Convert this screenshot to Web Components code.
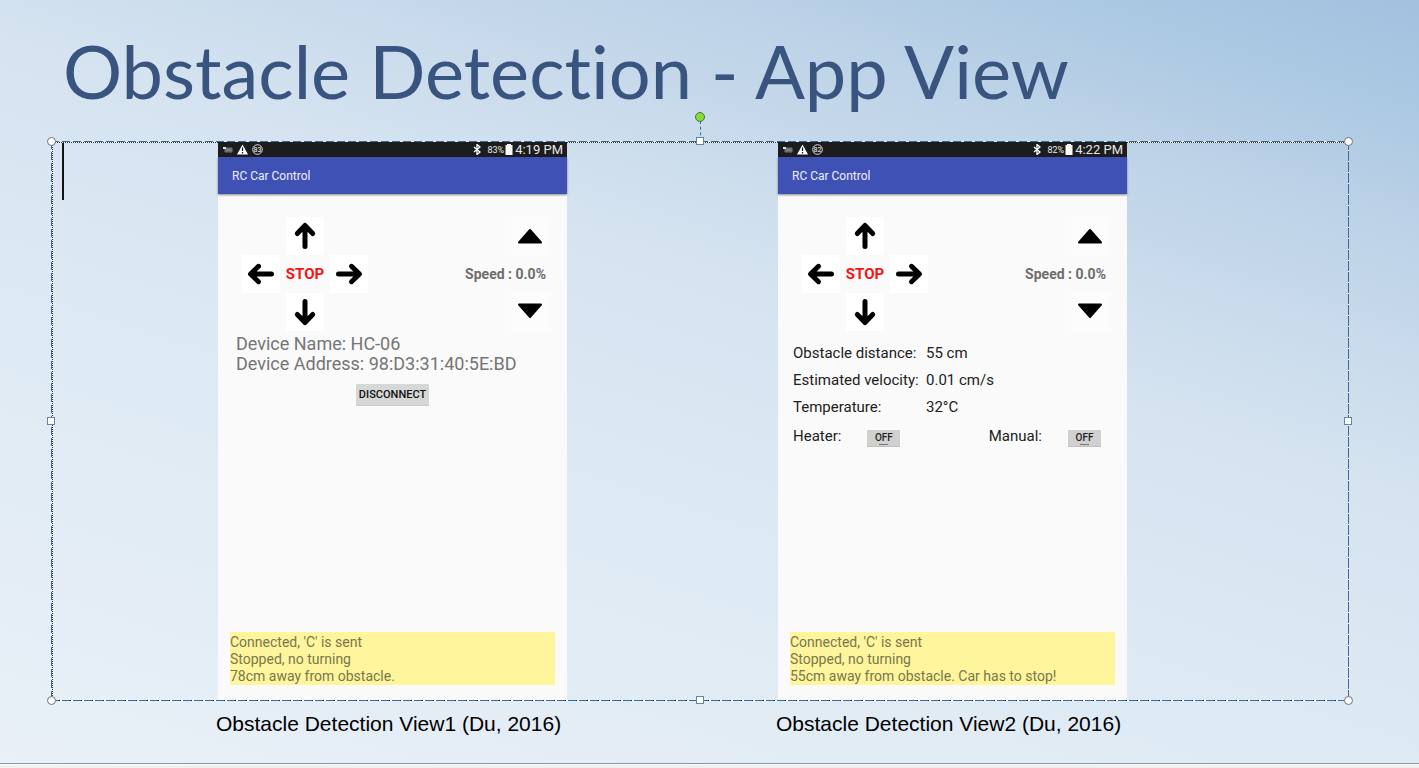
<!DOCTYPE html>
<html lang="en">
<head>
<meta charset="utf-8">
<title>Obstacle Detection - App View</title>
<style>
body { margin: 0; font-family: "Liberation Sans", Arial, sans-serif; }
</style>
</head>
<body>
<slide-page>
  <slide-title slot="title">Obstacle Detection - App View</slide-title>
  <phone-screen slot="first" battery="83" time="4:19 PM">
    <device-info name="HC-06" address="98:D3:31:40:5E:BD"></device-info>
    <span slot="log">Connected, 'C' is sent<br>Stopped, no turning<br>78cm away from obstacle.</span>
  </phone-screen>
  <phone-screen slot="second" battery="82" time="4:22 PM">
    <sensor-info distance="55 cm" velocity="0.01 cm/s" temperature="32°C"></sensor-info>
    <span slot="log">Connected, 'C' is sent<br>Stopped, no turning<br>55cm away from obstacle. Car has to stop!</span>
  </phone-screen>
  <span slot="caption1">Obstacle Detection View1 (Du, 2016)</span>
  <span slot="caption2">Obstacle Detection View2 (Du, 2016)</span>
</slide-page>

<script>
function define(tag, render) {
  customElements.define(tag, class extends HTMLElement {
    constructor() {
      super();
      this.attachShadow({ mode: 'open' });
    }
    connectedCallback() {
      this.shadowRoot.innerHTML = render(this);
    }
  });
}

define('slide-title', () => `
  <style>
    :host { display: block; }
    h1 { margin: 0; font: 400 74px/88px Lato, sans-serif; font-variant-ligatures: none; color: #38547f; white-space: nowrap; }
  </style>
  <h1><slot></slot></h1>`);

define('slide-page', () => `
  <style>
    :host { display: flex; flex-direction: column; min-height: 100vh; }
    main {
      flex: 1; padding: 0 70px 0 51px;
      background: linear-gradient(198deg, #a1c1df 0%, #aecbe3 11%, #b6cee5 15%, #bfd4e8 21%, #d5e3f0 40%, #dbe7f3 54%, #ddeaf3 61%, #e2ecf5 77%, #e9f0f8 100%);
    }
    header { height: 141px; padding: 27px 0 0 12px; box-sizing: border-box; }
    .row { display: grid; grid-template-columns: 167fr 349fr 211fr 349fr 222fr; }
    .row > :nth-child(1) { grid-column: 2; }
    .row > :nth-child(2) { grid-column: 4; }
    slot[name="first"], slot[name="second"] { display: block; }
    .captions { margin-top: 11px; font-size: 21px; line-height: 24px; color: #000; }
    .captions p { margin: 0 0 0 -2px; white-space: nowrap; }
    footer { height: 4px; background: #f0f0f0; border-top: 1px solid #8b97a4; box-shadow: inset 0 1px #fff; }
  </style>
  <main>
    <header><slot name="title"></slot></header>
    <selection-frame>
      <div class="row"><slot name="first"></slot><slot name="second"></slot></div>
    </selection-frame>
    <div class="row captions">
      <p><slot name="caption1"></slot></p>
      <p><slot name="caption2"></slot></p>
    </div>
  </main>
  <footer></footer>`);

define('selection-frame', () => `
  <style>
    :host { display: block; position: relative; padding: 1px 0; }
    .line { position: absolute; }
    .top, .bottom { left: 0; right: 0; height: 1px; }
    .top { top: 0; background: repeating-linear-gradient(90deg, #3d6a9c 0 8px, #dfe9f2 8px 11px); }
    .bottom { bottom: 0; background: repeating-linear-gradient(90deg, #3d6a9c 0 8px, #111 8px 9px, #fff 9px 11px); }
    .left, .right { top: 0; bottom: 0; width: 1px; }
    .left { left: 0; background: repeating-linear-gradient(#3d6a9c 0 8px, transparent 8px 11px); }
    .right { right: 0; background: repeating-linear-gradient(#3d6a9c 0 9px, #fff 9px 10px, #555 10px 11px); }
    .dots-top { top: 1px; left: 0; right: 0; height: 1px; background: repeating-linear-gradient(90deg, #333 0 1px, #f4f7fa 1px 2px); }
    .dots-left { left: 1px; top: 0; bottom: 0; width: 1px; background: repeating-linear-gradient(#333 0 1px, #f4f7fa 1px 2px); }
    .content { position: relative; }
    .caret { position: absolute; left: 11px; top: 2px; width: 2px; height: 57px; background: #14140f; }
    .handles { position: absolute; inset: 0 1px 1px 0; }
    .stem { position: absolute; left: 50%; top: -20px; height: 20px; border-left: 1px dashed #3d6a9c; }
    .handle { position: absolute; box-sizing: border-box; background: #fff; width: 9px; height: 9px; translate: -4px -4px; }
    .round { border: 1px solid #6c7580; border-radius: 50%; }
    .square { width: 8px; height: 8px; border: 1px solid #6285a8; }
    .rotate { width: 10px; height: 10px; border: 1px solid #4c7440; border-radius: 50%; background: #84dc34; translate: -5px -5px; }
  </style>
  <div class="line dots-top"></div><div class="line dots-left"></div>
  <div class="content"><slot></slot></div>
  <div class="line top"></div><div class="line bottom"></div>
  <div class="line left"></div><div class="line right"></div>
  <div class="caret"></div>
  <div class="handles">
    <div class="stem"></div>
    <i class="handle rotate" style="left:50%;top:-24px"></i>
    <i class="handle round" style="left:0;top:0"></i>
    <i class="handle square" style="left:50%;top:0"></i>
    <i class="handle round" style="left:100%;top:0"></i>
    <i class="handle square" style="left:0;top:50%"></i>
    <i class="handle square" style="left:100%;top:50%"></i>
    <i class="handle round" style="left:0;top:100%"></i>
    <i class="handle square" style="left:50%;top:100%"></i>
    <i class="handle round" style="left:100%;top:100%"></i>
  </div>`);

define('status-bar', el => `
  <style>
    :host { display: flex; align-items: center; height: 15px; padding: 0 4px 0 5px; background: #1c1c1c; color: #e8e8e8; font-family: Roboto, sans-serif; }
    svg { display: block; flex: none; }
    .notices { display: flex; align-items: center; gap: 4px; flex: 1; }
    .pct { font-size: 9px; margin: 0 1px 0 6px; }
    .time { font-size: 13px; line-height: 15px; margin-left: 2px; }
  </style>
  <div class="notices">
    <svg width="10" height="9" viewBox="0 0 10 9"><path d="M2 3h7v4H2z" fill="#666" stroke="#777"/><path d="M0 2h3v2H0z" fill="#ddd"/><path d="M3 5h5" stroke="#999"/></svg>
    <svg width="11" height="11" viewBox="0 0 11 11"><path d="M5.500.5 11 10.500H0z" fill="#fff"/><path d="M5.500 3.500v3.500M5.500 8v1.500" stroke="#1c1c1c" stroke-width="1.300"/></svg>
    <svg width="11" height="11" viewBox="0 0 11 11"><circle cx="5.500" cy="5.500" r="4.800" fill="none" stroke="#ddd"/><text x="5.500" y="8" text-anchor="middle" font-size="7" fill="#fff">${el.getAttribute('battery')}</text></svg>
  </div>
  <svg width="8" height="11" viewBox="0 0 8 11"><path d="M1 3l6 5-3 2.500v-10L7 3 1 8" fill="none" stroke="#fff" stroke-width="1.300"/></svg>
  <span class="pct">${el.getAttribute('battery')}%</span>
  <svg width="8" height="11" viewBox="0 0 8 11"><path d="M2 0h4v1h1.500v10H.5V1H2z" fill="#fff"/></svg>
  <span class="time">${el.getAttribute('time')}</span>`);

define('icon-button', el => {
  const shapes = {
    up: '<path d="M19 29.500V9M11.300 16.500 19 8.500l7.700 8" fill="none"/>',
    down: '<path d="M19 8.500V29M11.300 21.500 19 29.500l7.700-8" fill="none"/>',
    left: '<path d="M29.500 19H9M16.500 11.300 8.500 19l8 7.700" fill="none"/>',
    right: '<path d="M8.500 19H29M21.500 11.300 29.500 19l-8 7.700" fill="none"/>',
    faster: '<path d="M19 13 30 25.500H8z" stroke-width="2"/>',
    slower: '<path d="M19 24 30 11.500H8z" stroke-width="2"/>'
  };
  return `
  <style>
    :host { display: block; width: 38px; height: 38px; }
    button { display: block; width: 100%; height: 100%; padding: 0; border: 0; background: var(--tile, #fff); }
    svg { display: block; }
  </style>
  <button type="button" aria-label="${el.getAttribute('icon')}">
    <svg width="38" height="38" viewBox="0 0 38 38" stroke="#000" stroke-width="5" stroke-linecap="round" stroke-linejoin="round">${shapes[el.getAttribute('icon')]}</svg>
  </button>`;
});

define('car-controls', () => `
  <style>
    :host { display: flex; justify-content: space-between; padding: 0 18px 0 24px; font-family: Roboto, sans-serif; }
    .pad { display: grid; grid-template: ". up ." 38px "left stop right" 38px ". down ." 38px / 38px 50px 38px; justify-items: center; align-items: center; }
    .up { grid-area: up; }
    .left { grid-area: left; }
    .right { grid-area: right; }
    .down { grid-area: down; }
    .stop { grid-area: stop; padding: 0; border: 0; background: none; color: #f51414; font: 700 15px/38px Roboto, sans-serif; }
    .speed { display: grid; grid-template-rows: repeat(3, 38px); justify-items: end; align-items: center; --tile: #fcfcfc; }
    .speed span { color: #6d6d6d; font-size: 14px; font-weight: 700; padding-right: 3px; }
  </style>
  <div class="pad">
    <icon-button class="up" icon="up"></icon-button>
    <icon-button class="left" icon="left"></icon-button>
    <button class="stop" type="button">STOP</button>
    <icon-button class="right" icon="right"></icon-button>
    <icon-button class="down" icon="down"></icon-button>
  </div>
  <div class="speed">
    <icon-button icon="faster"></icon-button>
    <span>Speed : 0.0%</span>
    <icon-button icon="slower"></icon-button>
  </div>`);

define('device-info', el => `
  <style>
    :host { display: block; padding: 3px 18px 0; color: #757575; font: 18px/20px Roboto, sans-serif; white-space: nowrap; }
    button { display: block; margin: 10px auto 0; width: 73px; height: 22px; padding: 0; border: 0; border-radius: 1px; background: #d6d7d7; color: #111; font: 500 11px/22px Roboto, sans-serif; box-shadow: inset 0 -1px #cbcccc; }
  </style>
  <div>Device Name: ${el.getAttribute('name')}</div>
  <div>Device Address: ${el.getAttribute('address')}</div>
  <button type="button">DISCONNECT</button>`);

define('sensor-info', el => `
  <style>
    :host { display: block; padding: 9px 26px 0 15px; color: #212121; font: 15px/27px Roboto, sans-serif; white-space: nowrap; }
    dl { display: grid; grid-template-columns: 133px 1fr; margin: 0; }
    dd { margin: 0; }
    .switches { display: flex; justify-content: space-between; line-height: 31px; }
    .switch { display: flex; align-items: center; gap: 26px; }
    button { position: relative; width: 33px; height: 17px; margin-top: 3px; padding: 0; border: 0; background: #d0d0d0; color: #222; font: 500 10px/16px Roboto, sans-serif; box-shadow: inset 0 -1px #bfbfbf; }
    button::after { content: ""; position: absolute; left: 12px; bottom: 2px; width: 9px; height: 1px; background: #777; }
  </style>
  <dl>
    <dt>Obstacle distance:</dt><dd>${el.getAttribute('distance')}</dd>
    <dt>Estimated velocity:</dt><dd>${el.getAttribute('velocity')}</dd>
    <dt>Temperature:</dt><dd>${el.getAttribute('temperature')}</dd>
  </dl>
  <div class="switches">
    <div class="switch"><label for="heater">Heater:</label><button id="heater" type="button" aria-pressed="false">OFF</button></div>
    <div class="switch"><label for="manual">Manual:</label><button id="manual" type="button" aria-pressed="false">OFF</button></div>
  </div>`);

define('phone-screen', el => `
  <style>
    :host { display: flex; flex-direction: column; min-height: 558px; background: #fafafa; font-family: Roboto, sans-serif; }
    .appbar { height: 37px; background: #3f51b5; color: #eef0fa; font-size: 12px; line-height: 38px; padding-left: 14px; box-shadow: 0 1px 2px #0007; }
    car-controls { margin-top: 23px; }
    .log { margin: auto 12px 15px; padding: 2px 0 0; background: #fff59d; color: #7a764c; font-size: 14px; line-height: 17px; }
  </style>
  <status-bar battery="${el.getAttribute('battery')}" time="${el.getAttribute('time')}"></status-bar>
  <div class="appbar">RC Car Control</div>
  <car-controls></car-controls>
  <slot></slot>
  <div class="log"><slot name="log"></slot></div>`);
</script>
</body>
</html>
